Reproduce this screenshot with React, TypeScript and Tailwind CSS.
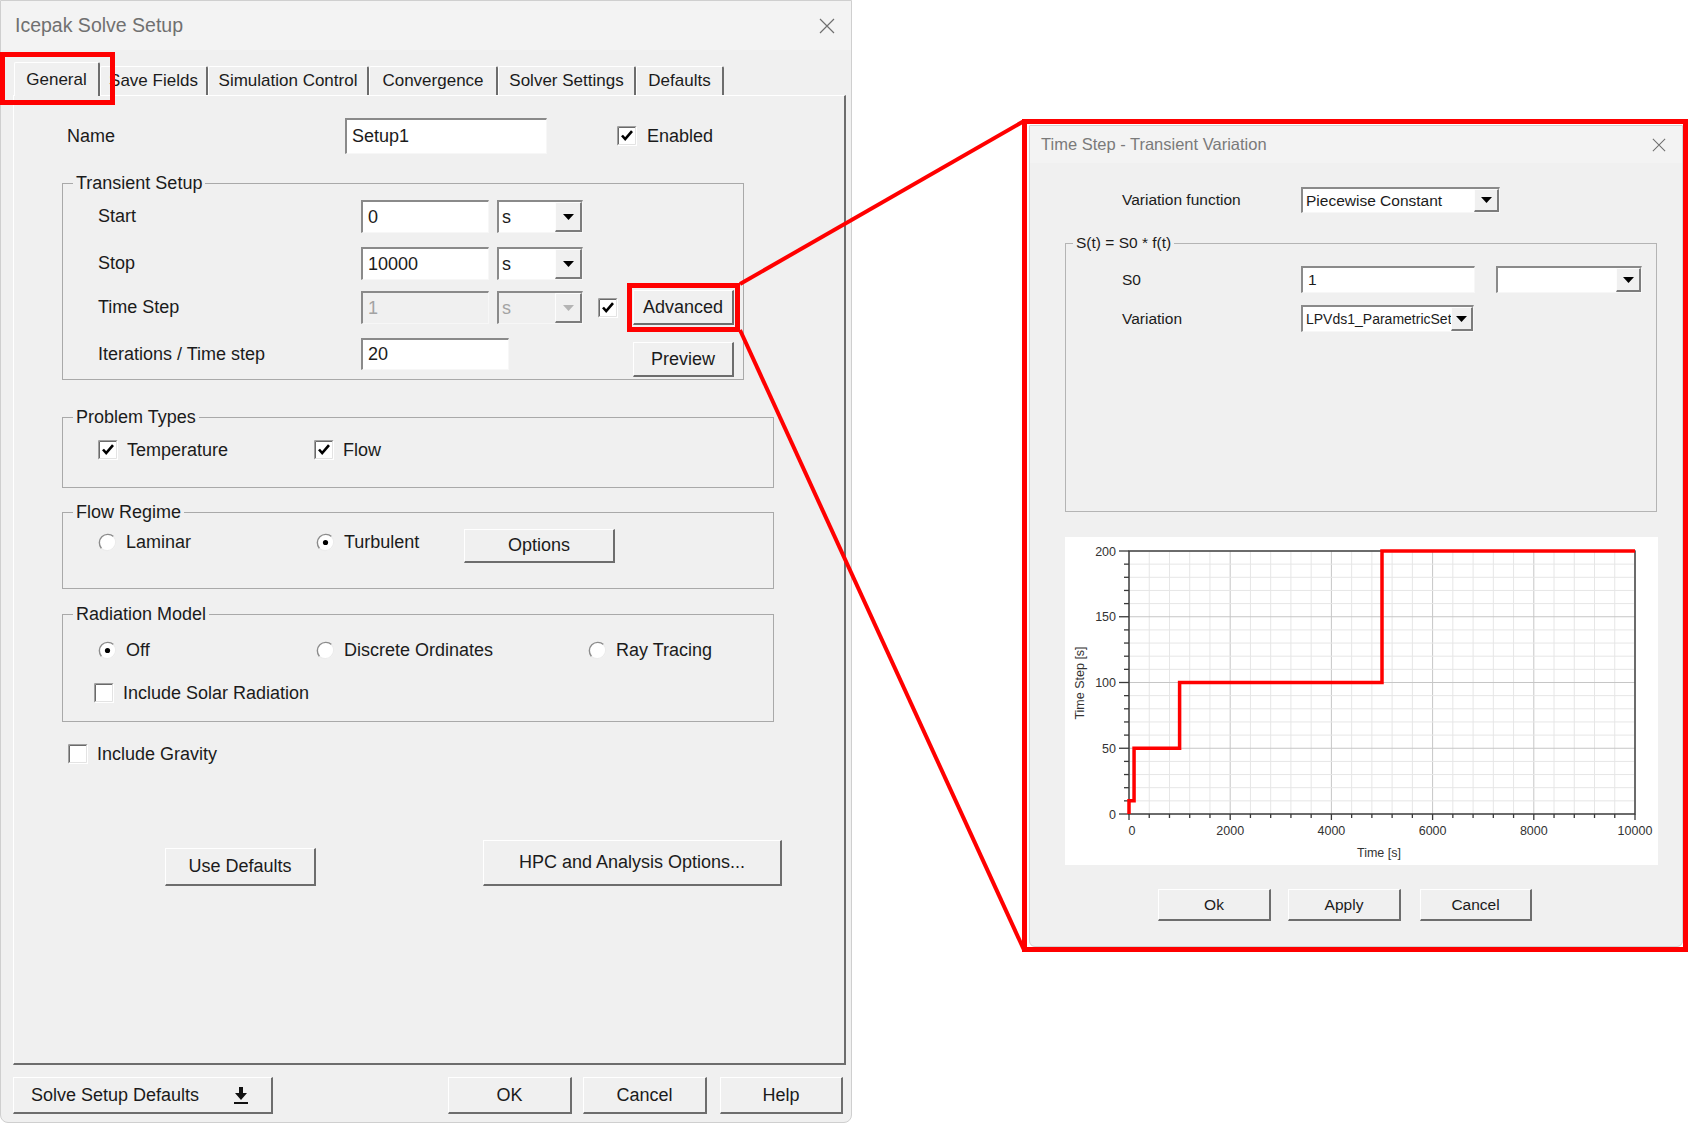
import React from 'react';

// classic win32 bevels
const sunken =
  'border-t-2 border-l-2 border-b border-r border-t-[#8a8a8a] border-l-[#8a8a8a] border-b-[#f7f7f7] border-r-[#f7f7f7]';
const raised =
  'border-t border-l border-b-2 border-r-2 border-t-white border-l-white border-b-[#6d6d6d] border-r-[#6d6d6d] bg-[#f0f0f0]';
const arrowBox =
  'border-t border-l border-b-2 border-r-2 border-t-[#fdfdfd] border-l-[#fdfdfd] border-b-[#7c7c7c] border-r-[#7c7c7c] bg-[#f0f0f0]';

type Props = { className?: string; children?: React.ReactNode };

const TextBox = ({ value, className = '', disabled = false }: { value: string; className?: string; disabled?: boolean }) => (
  <div
    className={`${sunken} ${disabled ? 'bg-[#f0f0f0] text-[#a3a3a3]' : 'bg-white'} flex items-center pl-[5px] whitespace-nowrap overflow-hidden ${className}`}
  >
    {value}
  </div>
);

const Combo = ({
  value = '',
  className = '',
  disabled = false,
  arrow = 'w-[27px]',
}: {
  value?: string;
  className?: string;
  disabled?: boolean;
  arrow?: string;
}) => (
  <div className={`${sunken} ${disabled ? 'bg-[#f0f0f0] text-[#a3a3a3]' : 'bg-white'} flex ${className}`}>
    <div className="flex-1 min-w-0 flex items-center pl-[3px] whitespace-nowrap overflow-hidden">{value}</div>
    <div className={`${arrowBox} ${arrow} shrink-0 flex items-center justify-center`}>
      <svg width="11" height="6" viewBox="0 0 11 6">
        <path d="M0 0h11L5.5 6z" fill={disabled ? '#b4b4b4' : '#000'} />
      </svg>
    </div>
  </div>
);

const Button = ({ children, className = '' }: Props) => (
  <button type="button" className={`${raised} flex items-center justify-center text-[#1b1b1b] ${className}`}>
    {children}
  </button>
);

const CheckBox = ({ checked = false }: { checked?: boolean }) => (
  <svg width="20" height="20" viewBox="0 0 20 20" className="shrink-0">
    <rect x="0" y="0" width="20" height="20" fill="#fff" />
    <path d="M0.5 19.5V0.5H19.5" stroke="#a0a0a0" fill="none" />
    <path d="M1.5 18.5V1.5H18.5" stroke="#6a6a6a" fill="none" />
    <path d="M0.5 19.5H19.5V0.5" stroke="#fff" fill="none" />
    <path d="M1.5 18.5H18.5V1.5" stroke="#e3e3e3" fill="none" />
    {checked && <path d="M5 9.5l3.2 3.6L15 5.2" stroke="#000" strokeWidth="2.6" fill="none" />}
  </svg>
);

const Radio = ({ checked = false }: { checked?: boolean }) => (
  <svg width="19" height="19" viewBox="0 0 19 19" className="shrink-0">
    <circle cx="9.5" cy="9.5" r="8.5" fill="#fff" />
    <path d="M3.5 15.5A8.5 8.5 0 0 1 15.5 3.5" stroke="#8c8c8c" strokeWidth="1.4" fill="none" />
    <path d="M15.5 3.5A8.5 8.5 0 0 1 3.5 15.5" stroke="#ececec" strokeWidth="1.2" fill="none" />
    {checked && <circle cx="9.5" cy="9.5" r="2.6" fill="#000" />}
  </svg>
);

const Group = ({ title, className = '', legend = 'ml-[10px] px-[3px] leading-[20px]', children }: Props & { title: string; legend?: string }) => (
  <fieldset className={`border border-[#a9a9a9] ${className}`}>
    <legend className={legend}>{title}</legend>
    {children}
  </fieldset>
);

const CloseX = ({ size = 16 }: { size?: number }) => (
  <svg width={size} height={size} viewBox="0 0 16 16">
    <path d="M1 1L15 15M15 1L1 15" stroke="#6f6f6f" strokeWidth="1.2" />
  </svg>
);

const tabs = [
  { label: 'General', cls: 'w-[86px] ml-[1px] h-[34px] -mb-[1px] z-10' },
  { label: 'Save Fields', cls: 'w-[108px] h-[29px]' },
  { label: 'Simulation Control', cls: 'w-[161px] h-[29px]' },
  { label: 'Convergence', cls: 'w-[129px] h-[29px]' },
  { label: 'Solver Settings', cls: 'w-[138px] h-[29px]' },
  { label: 'Defaults', cls: 'w-[88px] h-[29px]' },
];

const steps: [number, number][] = [
  [0, 0],
  [0, 10],
  [100, 10],
  [100, 50],
  [1000, 50],
  [1000, 100],
  [5000, 100],
  [5000, 200],
  [10000, 200],
];

const Chart = () => {
  const L = 64;
  const R = 570;
  const T = 14;
  const B = 277;
  const xs = (t: number) => L + (t / 10000) * (R - L);
  const ys = (v: number) => B - (v / 200) * (B - T);
  const xTicks = Array.from({ length: 26 }, (_, i) => i * 400);
  const yTicks = Array.from({ length: 21 }, (_, i) => i * 10);
  const pts = steps.map(([t, v]) => `${xs(t)},${ys(v)}`).join(' ');

  return (
    <div className="w-[593px] h-[328px] bg-white ml-[35px] mt-[25px]">
      <svg width="593" height="328" viewBox="0 0 593 328" fontFamily="Liberation Sans, Arial, sans-serif">
        {xTicks.map((t) => (
          <line key={`gx${t}`} x1={xs(t)} x2={xs(t)} y1={T} y2={B} stroke={t % 2000 === 0 ? '#c6c6c6' : '#e6e6e6'} />
        ))}
        {yTicks.map((v) => (
          <line key={`gy${v}`} x1={L} x2={R} y1={ys(v)} y2={ys(v)} stroke={v % 50 === 0 ? '#c6c6c6' : '#e6e6e6'} />
        ))}
        <rect x={L} y={T} width={R - L} height={B - T} fill="none" stroke="#3a3a3a" strokeWidth="1.4" />
        {yTicks.map((v) => (
          <line key={`ty${v}`} x1={v % 50 === 0 ? L - 10 : L - 5} x2={L} y1={ys(v)} y2={ys(v)} stroke="#3a3a3a" strokeWidth="1.3" />
        ))}
        {xTicks.map((t) => (
          <line key={`tx${t}`} x1={xs(t)} x2={xs(t)} y1={B} y2={t % 2000 === 0 ? B + 6 : B + 4} stroke="#3a3a3a" strokeWidth="1.3" />
        ))}
        <polyline points={pts} fill="none" stroke="#ff0000" strokeWidth="3.5" />
        {[0, 50, 100, 150, 200].map((v) => (
          <text key={`ly${v}`} x={L - 13} y={ys(v) + 4.5} fontSize="12.5" fill="#333" textAnchor="end">
            {v}
          </text>
        ))}
        {[0, 2000, 4000, 6000, 8000, 10000].map((t) => (
          <text key={`lx${t}`} x={xs(t) + (t === 0 ? 3 : 0)} y={B + 21} fontSize="12.5" fill="#333" textAnchor="middle">
            {t}
          </text>
        ))}
        <text x={314} y={320} fontSize="12.5" fill="#333" textAnchor="middle">
          Time [s]
        </text>
        <text x={0} y={0} fontSize="12.5" fill="#333" textAnchor="middle" transform="translate(19 146) rotate(-90)">
          Time Step [s]
        </text>
      </svg>
    </div>
  );
};

const SolveSetup = () => (
  <div className="w-[852px] h-[1123px] shrink-0 bg-[#f0f0f0] border border-[#cfcfcf] rounded-b-[8px] flex flex-col text-[18px] text-[#1b1b1b]">
    {/* title bar */}
    <div className="h-[49px] bg-[#f3f3f3] flex items-center justify-between pl-[14px] pr-[16px]">
      <span className="text-[19.5px] text-[#707070]">Icepak Solve Setup</span>
      <CloseX />
    </div>

    {/* tabs */}
    <div className="pl-[12px] mt-[12px] flex items-end h-[33px] text-[17px]">
      {tabs.map((t) => (
        <div
          key={t.label}
          className={`${t.cls} relative bg-[#f0f0f0] border-t border-l border-r-2 border-t-white border-l-white border-r-[#6d6d6d] rounded-t-[2px] flex items-center justify-center whitespace-nowrap`}
        >
          {t.label}
        </div>
      ))}
    </div>

    {/* tab page */}
    <div className="ml-[12px] w-[833px] h-[970px] border-t border-l border-t-white border-l-white border-r-2 border-b-2 border-r-[#6d6d6d] border-b-[#6d6d6d]">
      <div className="pt-[22px] flex items-center h-[58px]">
        <span className="pl-[53px] w-[331px]">Name</span>
        <TextBox value="Setup1" className="w-[202px] h-[36px]" />
        <div className="ml-[70px] flex items-center gap-[10px]">
          <CheckBox checked />
          <span>Enabled</span>
        </div>
      </div>

      <Group title="Transient Setup" className="ml-[48px] mt-[19px] w-[682px] pb-[2px]">
        <div className="mt-[7px] flex items-center h-[33px]">
          <span className="pl-[35px] w-[298px]">Start</span>
          <TextBox value="0" className="w-[128px] h-[33px]" />
          <Combo value="s" className="ml-[8px] w-[86px] h-[33px]" />
        </div>
        <div className="mt-[14px] flex items-center h-[33px]">
          <span className="pl-[35px] w-[298px]">Stop</span>
          <TextBox value="10000" className="w-[128px] h-[33px]" />
          <Combo value="s" className="ml-[8px] w-[86px] h-[33px]" />
        </div>
        <div className="mt-[10px] flex items-center h-[35px]">
          <span className="pl-[35px] w-[298px]">Time Step</span>
          <TextBox value="1" disabled className="w-[128px] h-[33px]" />
          <Combo value="s" disabled className="ml-[8px] w-[86px] h-[33px]" />
          <div className="ml-[15px]">
            <CheckBox checked />
          </div>
          <Button className="ml-[15px] w-[101px] h-[35px]">Advanced</Button>
        </div>
        <div className="mt-[13px] flex items-start h-[39px]">
          <span className="pl-[35px] w-[298px] leading-[32px]">Iterations / Time step</span>
          <TextBox value="20" className="w-[148px] h-[32px]" />
          <Button className="ml-[124px] mt-[4px] w-[101px] h-[35px]">Preview</Button>
        </div>
      </Group>

      <Group title="Problem Types" className="ml-[48px] mt-[27px] w-[712px] pb-[27px]">
        <div className="mt-[13px] flex items-center h-[20px] pl-[35px]">
          <div className="w-[216px] flex items-center gap-[9px]">
            <CheckBox checked />
            <span>Temperature</span>
          </div>
          <div className="flex items-center gap-[9px]">
            <CheckBox checked />
            <span>Flow</span>
          </div>
        </div>
      </Group>

      <Group title="Flow Regime" className="ml-[48px] mt-[14px] w-[712px] pb-[25px]">
        <div className="mt-[7px] flex items-start pl-[35px]">
          <div className="w-[218px] mt-[3px] h-[20px] flex items-center gap-[9px]">
            <Radio />
            <span>Laminar</span>
          </div>
          <div className="w-[148px] mt-[3px] h-[20px] flex items-center gap-[9px]">
            <Radio checked />
            <span>Turbulent</span>
          </div>
          <Button className="w-[151px] h-[34px]">Options</Button>
        </div>
      </Group>

      <Group title="Radiation Model" className="ml-[48px] mt-[15px] w-[712px] pb-[18px]">
        <div className="mt-[17px] flex items-center h-[19px] pl-[35px]">
          <div className="w-[218px] flex items-center gap-[9px]">
            <Radio checked />
            <span>Off</span>
          </div>
          <div className="w-[272px] flex items-center gap-[9px]">
            <Radio />
            <span>Discrete Ordinates</span>
          </div>
          <div className="flex items-center gap-[9px]">
            <Radio />
            <span>Ray Tracing</span>
          </div>
        </div>
        <div className="mt-[23px] flex items-center h-[20px] pl-[31px] gap-[9px]">
          <CheckBox />
          <span>Include Solar Radiation</span>
        </div>
      </Group>

      <div className="mt-[22px] flex items-center h-[20px] pl-[54px] gap-[9px]">
        <CheckBox />
        <span>Include Gravity</span>
      </div>

      <div className="mt-[76px] flex items-end">
        <Button className="ml-[151px] w-[151px] h-[38px]">Use Defaults</Button>
        <Button className="ml-[167px] w-[299px] h-[46px]">HPC and Analysis Options...</Button>
      </div>
    </div>

    {/* footer */}
    <div className="mt-[12px] pl-[12px] flex items-center">
      <Button className="w-[260px] h-[37px] !justify-between pl-[17px] pr-[22px]">
        <span>Solve Setup Defaults</span>
        <svg width="16" height="20" viewBox="0 0 16 20">
          <path d="M6 2h4v6h4l-6 7-6-7h4z" fill="#111" />
          <rect x="1" y="17" width="14" height="2" fill="#111" />
        </svg>
      </Button>
      <Button className="ml-[175px] w-[124px] h-[37px]">OK</Button>
      <Button className="ml-[11px] w-[124px] h-[37px]">Cancel</Button>
      <Button className="ml-[13px] w-[123px] h-[37px]">Help</Button>
    </div>
  </div>
);

const TransientVariation = () => (
  <div className="ml-[177px] mt-[125px] w-[654px] h-[822px] shrink-0 bg-[#f0f0f0] border border-[#d2d2d2] rounded-b-[6px] flex flex-col text-[15.5px] text-[#1b1b1b]">
    <div className="h-[37px] bg-[#f3f3f3] flex items-center justify-between pl-[11px] pr-[16px]">
      <span className="text-[16.5px] text-[#7a7a7a]">Time Step - Transient Variation</span>
      <CloseX size={14} />
    </div>

    <div className="mt-[24px] flex items-center h-[26px]">
      <span className="pl-[92px] w-[271px]">Variation function</span>
      <Combo value="Piecewise Constant" className="w-[199px] h-[26px]" arrow="w-[25px]" />
    </div>

    <Group
      title="S(t) = S0 * f(t)"
      legend="ml-[7px] px-[3px] leading-[18px]"
      className="ml-[35px] mt-[21px] w-[592px] pb-[179px] border-[#b4b4b4]"
    >
      <div className="mt-[14px] flex items-center h-[27px]">
        <span className="pl-[56px] w-[235px]">S0</span>
        <TextBox value="1" className="w-[174px] h-[27px]" />
        <Combo className="ml-[21px] w-[146px] h-[27px]" arrow="w-[25px]" />
      </div>
      <div className="mt-[12px] flex items-center h-[27px]">
        <span className="pl-[56px] w-[235px]">Variation</span>
        <Combo value="LPVds1_ParametricSetup1" className="w-[173px] h-[27px] text-[14px]" arrow="w-[22px]" />
      </div>
    </Group>

    <Chart />

    <div className="mt-[24px] flex items-center">
      <Button className="ml-[128px] w-[113px] h-[32px]">Ok</Button>
      <Button className="ml-[17px] w-[113px] h-[32px]">Apply</Button>
      <Button className="ml-[19px] w-[112px] h-[32px]">Cancel</Button>
    </div>
  </div>
);

export default function App() {
  return (
    <div className="relative w-[1689px] h-[1125px] bg-white overflow-hidden flex items-start font-['Liberation_Sans',Arial,sans-serif]">
      <SolveSetup />
      <TransientVariation />

      {/* callout highlights */}
      <svg className="absolute inset-0 pointer-events-none" width="1689" height="1125">
        <g fill="none" stroke="#ff0000">
          <rect x="2.5" y="54.5" width="110" height="48" strokeWidth="5" />
          <rect x="629.5" y="285.5" width="108" height="44" strokeWidth="5" />
          <rect x="1024.5" y="121.5" width="661" height="828" strokeWidth="5" />
          <line x1="740" y1="284" x2="1024" y2="121" strokeWidth="4" />
          <line x1="740" y1="330" x2="1024" y2="950" strokeWidth="4" />
        </g>
      </svg>
    </div>
  );
}
